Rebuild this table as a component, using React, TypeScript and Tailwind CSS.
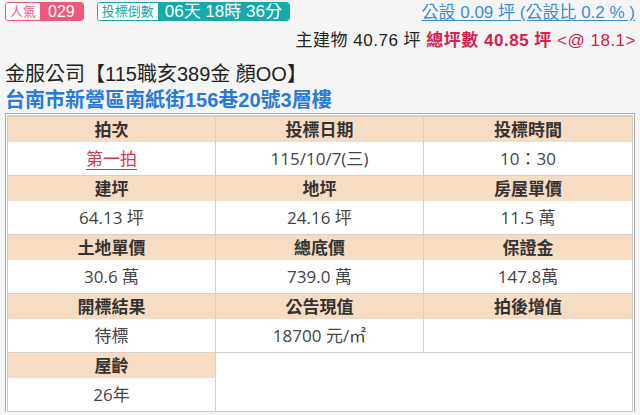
const font = { fontFamily: '"Liberation Sans", "Noto Sans CJK TC", sans-serif' }
const tableFont = { fontFamily: '"Open Sans", "Noto Sans CJK TC", sans-serif' }

type Cell = { label: string; value: string; red?: boolean }

const rows: Cell[][] = [
  [
    { label: "拍次", value: "第一拍", red: true },
    { label: "投標日期", value: "115/10/7(三)" },
    { label: "投標時間", value: "10：30" },
  ],
  [
    { label: "建坪", value: "64.13 坪" },
    { label: "地坪", value: "24.16 坪" },
    { label: "房屋單價", value: "11.5 萬" },
  ],
  [
    { label: "土地單價", value: "30.6 萬" },
    { label: "總底價", value: "739.0 萬" },
    { label: "保證金", value: "147.8萬" },
  ],
  [
    { label: "開標結果", value: "待標" },
    { label: "公告現值", value: "18700 元/㎡" },
    { label: "拍後增值", value: "" },
  ],
]

function Head({ children }: { children: React.ReactNode }) {
  return (
    <div className="h-[26px] bg-[#f6dcc2] flex items-center justify-center text-[17px] font-bold text-[#333] border-t border-[#d8d0c8]">
      {children}
    </div>
  )
}

function Val({ children, red }: { children: React.ReactNode; red?: boolean }) {
  return (
    <div
      className={`h-[33px] bg-white flex items-center justify-center text-[17px] ${
        red ? "text-[#d9364a] underline underline-offset-4 decoration-1" : "text-[#444]"
      }`}
    >
      {children}
    </div>
  )
}

export default function App() {
  return (
    <div className="w-[640px] h-[415px] overflow-hidden bg-[#f5f5f5]" style={font}>
      <div className="flex justify-between items-start pt-[2px] pl-[5px] pr-[5px]">
        <div className="flex gap-[13px]">
          <div className="flex h-[19px] rounded-[3px] overflow-hidden border border-[#f0587a]">
            <span className="bg-white text-[#f0587a] text-[13px] px-[4px] leading-[17px]">人氣</span>
            <span className="bg-[#f0587a] text-white text-[16px] px-[8px] leading-[17px]">029</span>
          </div>
          <div className="flex h-[19px] rounded-[3px] overflow-hidden border border-[#17aaad]">
            <span className="bg-white text-[#17aaad] text-[13px] px-[4px] leading-[17px]">投標倒數</span>
            <span className="bg-[#17aaad] text-white text-[17px] px-[7px] leading-[17px]">
              06天 18時 36分
            </span>
          </div>
        </div>
        <a className="text-[17px] text-[#3b8ed6] underline underline-offset-2 leading-[21px]">
          公設 0.09 坪 (公設比 0.2 % )
        </a>
      </div>
      <div className="text-right pr-[4px] mt-[8px] text-[17px] leading-[20px] tracking-[0.5px] text-[#222]">
        主建物 40.76 坪 <span className="font-bold text-[#d6204a]">總坪數 40.85 坪</span>{" "}
        <span className="text-[#d6204a]">&lt;@ 18.1&gt;</span>
      </div>
      <div className="pl-[5px] mt-[11px] text-[20px] leading-[24px] text-[#222]">金服公司【115職亥389金 顏OO】</div>
      <div className="pl-[5px] mt-[3px] text-[20px] leading-[22px] font-bold text-[#2a7ad8]">
        台南市新營區南紙街156巷20號3層樓
      </div>
      <div className="mx-[5px] mt-[2px] bg-white border-l border-r border-t border-[#aaa]" style={tableFont}>
        <div className="border border-[#d0cbc5] m-[1px]">
          {rows.map((r, i) => (
            <div key={i} className="grid grid-cols-3">
              {r.map((c, j) => (
                <div key={j} className={j < 2 ? "border-r border-[#d8d0c8]" : ""}>
                  <Head>{c.label}</Head>
                  <Val red={c.red}>{c.value}</Val>
                </div>
              ))}
            </div>
          ))}
          <div className="grid grid-cols-3">
            <div className="border-r border-[#d8d0c8]">
              <Head>屋齡</Head>
              <Val>26年</Val>
            </div>
            <div className="col-span-2 bg-white border-t border-[#d8d0c8]" />
          </div>
        </div>
      </div>
    </div>
  )
}
